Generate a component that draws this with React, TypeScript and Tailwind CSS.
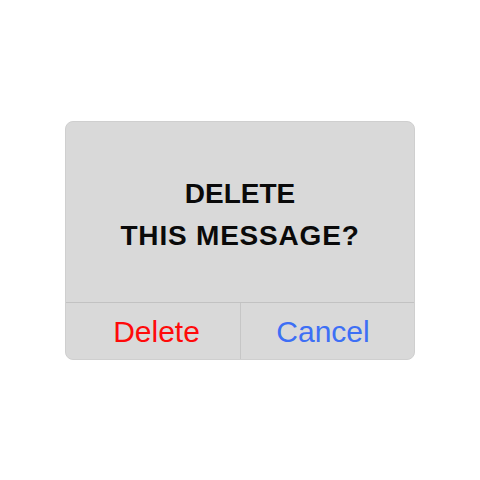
export default function App() {
  return (
    <div className="w-[480px] h-[480px] bg-white flex items-center justify-center">
      <div
        className="w-[350px] h-[239px] rounded-[8px] bg-[#d9d9d9] border border-[#cfcfcf] flex flex-col overflow-hidden"
        style={{ fontFamily: '"Liberation Sans", Arial, sans-serif' }}
      >
        {/* message */}
        <div className="h-[180px] pt-[51px] text-center text-[28px] leading-[42px] font-bold text-[#0a0a0a]">
          <div>DELETE</div>
          <div className="tracking-[0.8px]">THIS MESSAGE?</div>
        </div>
        {/* actions */}
        <div className="flex-1 flex border-t border-[#c2c2c2]">
          <button className="w-[175px] pl-[7px] pt-[3px] border-r border-[#c6c6c6] text-[30px] leading-[52px] text-[#ff0a0a]">
            Delete
          </button>
          <button className="flex-1 pr-[9px] pt-[3px] text-[30px] leading-[52px] text-[#3d6ff5]">
            Cancel
          </button>
        </div>
      </div>
    </div>
  );
}
